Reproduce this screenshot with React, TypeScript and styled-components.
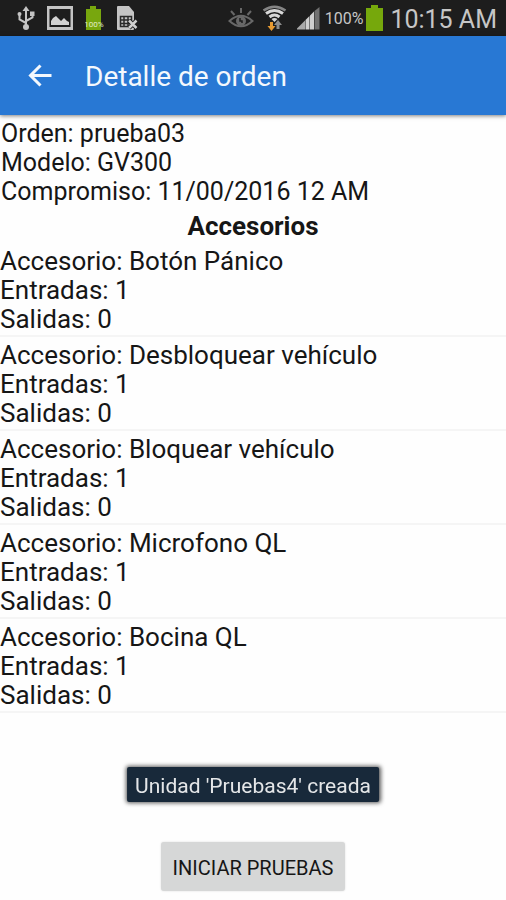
import React from 'react';
import styled, { createGlobalStyle } from 'styled-components';

const GlobalStyle = createGlobalStyle`
  *, *::before, *::after { box-sizing: border-box; }
  body {
    margin: 0;
    background: #fefefe;
    color: #161616;
    font-family: Roboto, 'Noto Sans', sans-serif;
  }
`;

const Screen = styled.div`
  display: flex;
  flex-direction: column;
  min-height: 100vh;
`;

const StatusBar = styled.div`
  display: flex;
  justify-content: space-between;
  align-items: center;
  height: 36px;
  padding: 0 9px 0 16px;
  background: #1d1d1d;
  color: #c6c6c6;
`;

const StatusGroup = styled.div<{ $gap: number }>`
  display: flex;
  align-items: center;
  gap: ${(p) => p.$gap}px;

  svg { display: block; flex: none; }
`;

const BatteryLevel = styled.span`
  margin: 0 2px 0 4px;
  padding-top: 2px;
  font-size: 16px;
  line-height: 34px;
`;

const Clock = styled.time`
  margin-left: 6px;
  padding-top: 3px;
  font-size: 25px;
  line-height: 33px;
  white-space: nowrap;
`;

const AppBar = styled.header`
  display: flex;
  align-items: center;
  gap: 32px;
  height: 79px;
  padding: 0 27px;
  background: #2878d4;
  color: #f4f8fd;
  box-shadow: 0 1px 4px rgba(0, 0, 0, 0.5);
`;

const BackButton = styled.button`
  display: flex;
  padding: 0;
  border: 0;
  background: none;
  color: inherit;
  cursor: pointer;
`;

const Title = styled.h1`
  margin: 0;
  padding-top: 2px;
  font-size: 28px;
  font-weight: 400;
  line-height: 32px;
`;

const Line = styled.p`
  margin: 0;
`;

const Summary = styled.section`
  padding: 4px 1px 0;
  font-size: 25px;
  line-height: 29px;
`;

const SectionTitle = styled.h2`
  margin: 5px 0 2px;
  font-size: 26px;
  font-weight: 700;
  line-height: 30px;
  text-align: center;
`;

const AccessoryList = styled.ul`
  margin: 0;
  padding: 0;
  list-style: none;
`;

const AccessoryItem = styled.li`
  padding: 4px 0 1px;
  border-bottom: 2px solid #f5f5f5;
  font-size: 26px;
  line-height: 29px;
`;

const Footer = styled.footer`
  display: flex;
  justify-content: center;
  margin-top: auto;
  padding: 48px 0 9px;
`;

const StartButton = styled.button`
  height: 49px;
  padding: 2px 12px 0;
  border: 0;
  border-radius: 3px;
  background: #d6d7d7;
  color: #161616;
  font: 400 20px Roboto, 'Noto Sans', sans-serif;
  box-shadow: 0 0 2px rgba(0, 0, 0, 0.15);
  cursor: pointer;
`;

const Toast = styled.div`
  position: fixed;
  bottom: 98px;
  left: 50%;
  transform: translateX(-50%);
  padding: 3px 8px 0;
  border-radius: 2px;
  background: #18293a;
  color: #e4e6e8;
  font-size: 21px;
  line-height: 32px;
  white-space: nowrap;
  box-shadow: 0 0 4px 1px rgba(0, 0, 0, 0.65);
`;

const UsbIcon = () => (
  <svg width="20" height="26" viewBox="0 0 20 26" fill="none" stroke="#c4c4c4" strokeWidth="2" aria-hidden="true">
    <path d="M10 4v18M10 18l-6.500-3.500V9M10 16l6.500-3.500V9" />
    <path d="M6.500 6 10 1l3.500 5z" fill="#c4c4c4" stroke="none" />
    <circle cx="3.500" cy="9" r="2" fill="#c4c4c4" stroke="none" />
    <path d="M14 6.500h4.500v4.500H14z" fill="#c4c4c4" stroke="none" />
    <circle cx="10" cy="22" r="3" fill="#c4c4c4" stroke="none" />
  </svg>
);

const PictureIcon = () => (
  <svg width="27" height="26" viewBox="0 0 27 26" aria-hidden="true">
    <path fill="#c4c4c4" fillRule="evenodd" d="M0 1h26v24H0zM2.500 4v18h21V4z" />
    <path fill="#d2d2d2" d="M4 20v-4l2-3 3-2 3 3 2 2 3-3 3 3 2 1v3z" />
  </svg>
);

const SmallBattery = () => (
  <svg width="20" height="26" viewBox="0 0 20 26" aria-hidden="true">
    <path fill="#78a70e" d="M5 1h6v3h5v21H1V4h4z" />
    <text x="9" y="22" textAnchor="middle" fontFamily="Roboto, sans-serif" fontSize="8" fill="#e3edc8">100%</text>
  </svg>
);

const SimIcon = () => (
  <svg width="23" height="26" viewBox="0 0 23 26" aria-hidden="true">
    <path fill="#c4c4c4" d="M2 1h11l5 6v17a1 1 0 0 1-1 1H2a1 1 0 0 1-1-1V2a1 1 0 0 1 1-1z" />
    <path fill="none" stroke="#2a2a2a" strokeWidth="1.500" d="M4.500 11.500h11v10h-11zM8 11.500v10M12 11.500v10M4.500 15h11M4.500 18.500h11" />
    <path stroke="#1d1d1d" strokeWidth="4.500" d="m13 15.500 7.500 7.500m0-7.500-7.500 7.500" />
    <path stroke="#d0d0d0" strokeWidth="2.500" d="m13 15.500 7.500 7.500m0-7.500-7.500 7.500" />
  </svg>
);

const EyeIcon = () => (
  <svg width="26" height="26" viewBox="0 0 26 26" fill="none" stroke="#686868" strokeWidth="2" aria-hidden="true">
    <path d="M1.500 16Q13 5.500 24.500 16 13 26.500 1.500 16z" />
    <path d="m3 6 3.500 4M13 3v5M23 6l-3.500 4" />
    <circle cx="13" cy="16" r="5" fill="#686868" stroke="none" />
    <path d="M12 13v3h2v2" stroke="#1d1d1d" strokeWidth="1.500" />
  </svg>
);

const WifiIcon = () => (
  <svg width="26" height="26" viewBox="0 0 26 26" fill="none" aria-hidden="true">
    <path stroke="#858585" strokeWidth="2.500" d="M1.500 5.500Q12.500-2 23.500 5.500" />
    <path stroke="#d8d8d8" strokeWidth="3" d="M4 8.500Q12.500 2.500 21 8.500M7.500 12q5-4 10 0" />
    <path fill="#d8d8d8" d="M9.500 14q3-2 6 0l-3 3z" />
    <path fill="#e69a32" d="M8 17h3v4h2.500l-4 5-4-5H8z" />
    <path fill="#8c8c8c" d="m16 15 4 5h-2.500v4h-3v-4H12z" />
  </svg>
);

const SignalIcon = () => (
  <svg width="25" height="24" viewBox="0 0 25 24" aria-hidden="true">
    <path fill="#a9a9a9" d="M1 23.500v-1l4-4v5zM5 23.500v-5l4-4v9z" />
    <path fill="#cfcfcf" d="M9.500 23.500V14l4-4v13.500zM14 23.500V9.500l4-4v18z" />
    <path fill="#717171" d="M18.500 23.500V5L23.500 1v22.500z" />
  </svg>
);

const BatteryIcon = () => (
  <svg width="19" height="26" viewBox="0 0 19 26" aria-hidden="true">
    <path fill="#76a80c" d="M6 0h7v3h5v23H1V3h5z" />
  </svg>
);

const BackArrow = () => (
  <svg width="26" height="26" viewBox="0 0 26 26" fill="none" stroke="currentColor" strokeWidth="3" aria-hidden="true">
    <path d="M24.500 12.500H4M13.500 2.500l-10 10 10 10" />
  </svg>
);

const summary = ['Orden: prueba03', 'Modelo: GV300', 'Compromiso: 11/00/2016 12 AM'];

const accessories = [
  { name: 'Botón Pánico', inputs: 1, outputs: 0 },
  { name: 'Desbloquear vehículo', inputs: 1, outputs: 0 },
  { name: 'Bloquear vehículo', inputs: 1, outputs: 0 },
  { name: 'Microfono QL', inputs: 1, outputs: 0 },
  { name: 'Bocina QL', inputs: 1, outputs: 0 },
];

export default function App() {
  return (
    <Screen>
      <GlobalStyle />
      <StatusBar>
        <StatusGroup $gap={11}>
          <UsbIcon />
          <PictureIcon />
          <SmallBattery />
          <SimIcon />
        </StatusGroup>
        <StatusGroup $gap={0}>
          <StatusGroup $gap={8}>
            <EyeIcon />
            <WifiIcon />
            <SignalIcon />
          </StatusGroup>
          <BatteryLevel>100%</BatteryLevel>
          <BatteryIcon />
          <Clock>10:15 AM</Clock>
        </StatusGroup>
      </StatusBar>
      <AppBar>
        <BackButton type="button" aria-label="Volver">
          <BackArrow />
        </BackButton>
        <Title>Detalle de orden</Title>
      </AppBar>
      <main>
        <Summary>
          {summary.map((text) => (
            <Line key={text}>{text}</Line>
          ))}
        </Summary>
        <SectionTitle>Accesorios</SectionTitle>
        <AccessoryList>
          {accessories.map((item) => (
            <AccessoryItem key={item.name}>
              <Line>Accesorio: {item.name}</Line>
              <Line>Entradas: {item.inputs}</Line>
              <Line>Salidas: {item.outputs}</Line>
            </AccessoryItem>
          ))}
        </AccessoryList>
      </main>
      <Footer>
        <StartButton type="button">INICIAR PRUEBAS</StartButton>
      </Footer>
      <Toast role="status">Unidad 'Pruebas4' creada</Toast>
    </Screen>
  );
}
